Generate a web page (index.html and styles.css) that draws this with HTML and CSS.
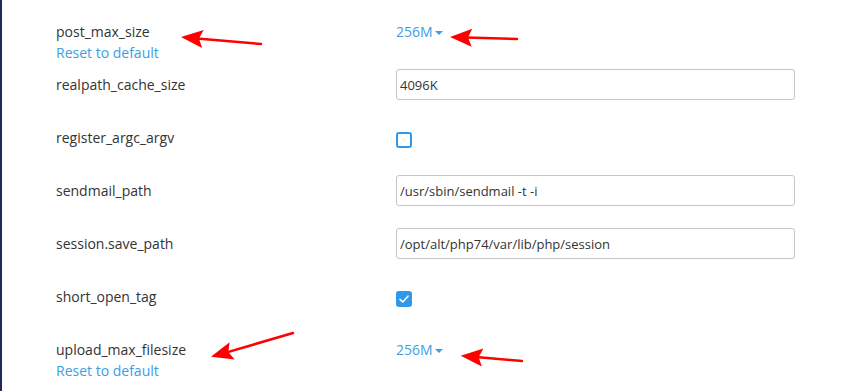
FILE: index.html
```html
<!DOCTYPE html>
<html lang="en">
<head>
<meta charset="utf-8">
<title>PHP options</title>
<link rel="stylesheet" href="styles.css">
</head>
<body>
<div class="page">
  <div class="options">
    <div class="row">
      <div class="label">
        <div class="name">post_max_size</div>
        <a class="reset" href="#">Reset to default</a>
      </div>
      <div class="value">
        <a class="select" href="#">256M<span class="caret"></span></a>
      </div>
    </div>
    <div class="row">
      <div class="label"><div class="name">realpath_cache_size</div></div>
      <div class="value"><input class="text" type="text" value="4096K"></div>
    </div>
    <div class="row">
      <div class="label"><div class="name">register_argc_argv</div></div>
      <div class="value"><span class="check"></span></div>
    </div>
    <div class="row">
      <div class="label"><div class="name">sendmail_path</div></div>
      <div class="value"><input class="text" type="text" value="/usr/sbin/sendmail -t -i"></div>
    </div>
    <div class="row">
      <div class="label"><div class="name">session.save_path</div></div>
      <div class="value"><input class="text" type="text" value="/opt/alt/php74/var/lib/php/session"></div>
    </div>
    <div class="row">
      <div class="label"><div class="name">short_open_tag</div></div>
      <div class="value">
        <span class="check checked">
          <svg viewBox="0 0 16 16" width="16" height="16"><path d="M4 8.3 L6.8 11 L12 5.2" fill="none" stroke="#fff" stroke-width="1.6" stroke-linecap="round" stroke-linejoin="round"/></svg>
        </span>
      </div>
    </div>
    <div class="row">
      <div class="label">
        <div class="name">upload_max_filesize</div>
        <a class="reset" href="#">Reset to default</a>
      </div>
      <div class="value">
        <a class="select" href="#">256M<span class="caret"></span></a>
      </div>
    </div>
  </div>

  <svg class="arrows" width="855" height="391" viewBox="0 0 855 391">
    <g stroke="#f00" stroke-width="2.5" stroke-linecap="round" fill="none">
      <line x1="197" y1="38.4" x2="261" y2="44"/>
      <line x1="466" y1="37.5" x2="517" y2="39"/>
      <line x1="226" y1="352.6" x2="293" y2="333"/>
      <line x1="476" y1="357" x2="522" y2="361"/>
    </g>
    <g fill="#f00">
      <polygon points="181,37 203.7,29.9 199,38.6 202.1,47.9"/>
      <polygon points="450,37 472.3,28.7 468,37.5 471.7,46.7"/>
      <polygon points="211,356.7 229.6,342.2 228.3,351.9 234.6,359.4"/>
      <polygon points="460.7,355.7 483.4,348.5 478.6,357.2 481.9,366.5"/>
    </g>
  </svg>
</div>
</body>
</html>
```

FILE: styles.css
```css
html, body {
  margin: 0;
  padding: 0;
  background: #fff;
}

body {
  font-family: "Open Sans", "Noto Sans", sans-serif;
  color: #333;
  font-size: 14px;
}

.page {
  position: relative;
  width: 855px;
  height: 391px;
  overflow: hidden;
  border-left: 2px solid #1f2a56;
  box-sizing: border-box;
}

.options {
  display: flex;
  flex-direction: column;
  gap: 22px;
  padding: 16px 0 0 54px;
}

.row {
  display: grid;
  grid-template-columns: 340px 399px;
  height: 31px;
}

.label {
  padding-top: 5px;
  line-height: 21px;
}

.name {
  color: #333;
}

.reset {
  display: block;
  color: #3d9ee8;
  text-decoration: none;
  line-height: 21px;
}

.value {
  display: flex;
  align-items: flex-start;
}

.select {
  display: inline-flex;
  align-items: center;
  margin-top: 6px;
  line-height: 20px;
  color: #3d9ee8;
  text-decoration: none;
}

.caret {
  display: inline-block;
  width: 0;
  height: 0;
  margin-left: 2px;
  margin-top: 1px;
  border-left: 4px solid transparent;
  border-right: 4px solid transparent;
  border-top: 4px solid #3d9ee8;
}

.text {
  width: 399px;
  height: 31px;
  box-sizing: border-box;
  margin: 0;
  padding: 0 3px;
  border: 1px solid #c6c6c6;
  border-radius: 3px;
  font-family: "Open Sans", "Noto Sans", sans-serif;
  font-size: 13px;
  color: #333;
  background: #fff;
  outline: none;
}

.check {
  display: block;
  width: 16px;
  height: 16px;
  box-sizing: border-box;
  margin-top: 10px;
  border: 2px solid #2f98ea;
  border-radius: 3px;
  background: #fff;
}

.check.checked {
  border: none;
  background: #2f98ea;
}

.check svg {
  display: block;
}

.arrows {
  position: absolute;
  left: -2px;
  top: 0;
  pointer-events: none;
}
```
